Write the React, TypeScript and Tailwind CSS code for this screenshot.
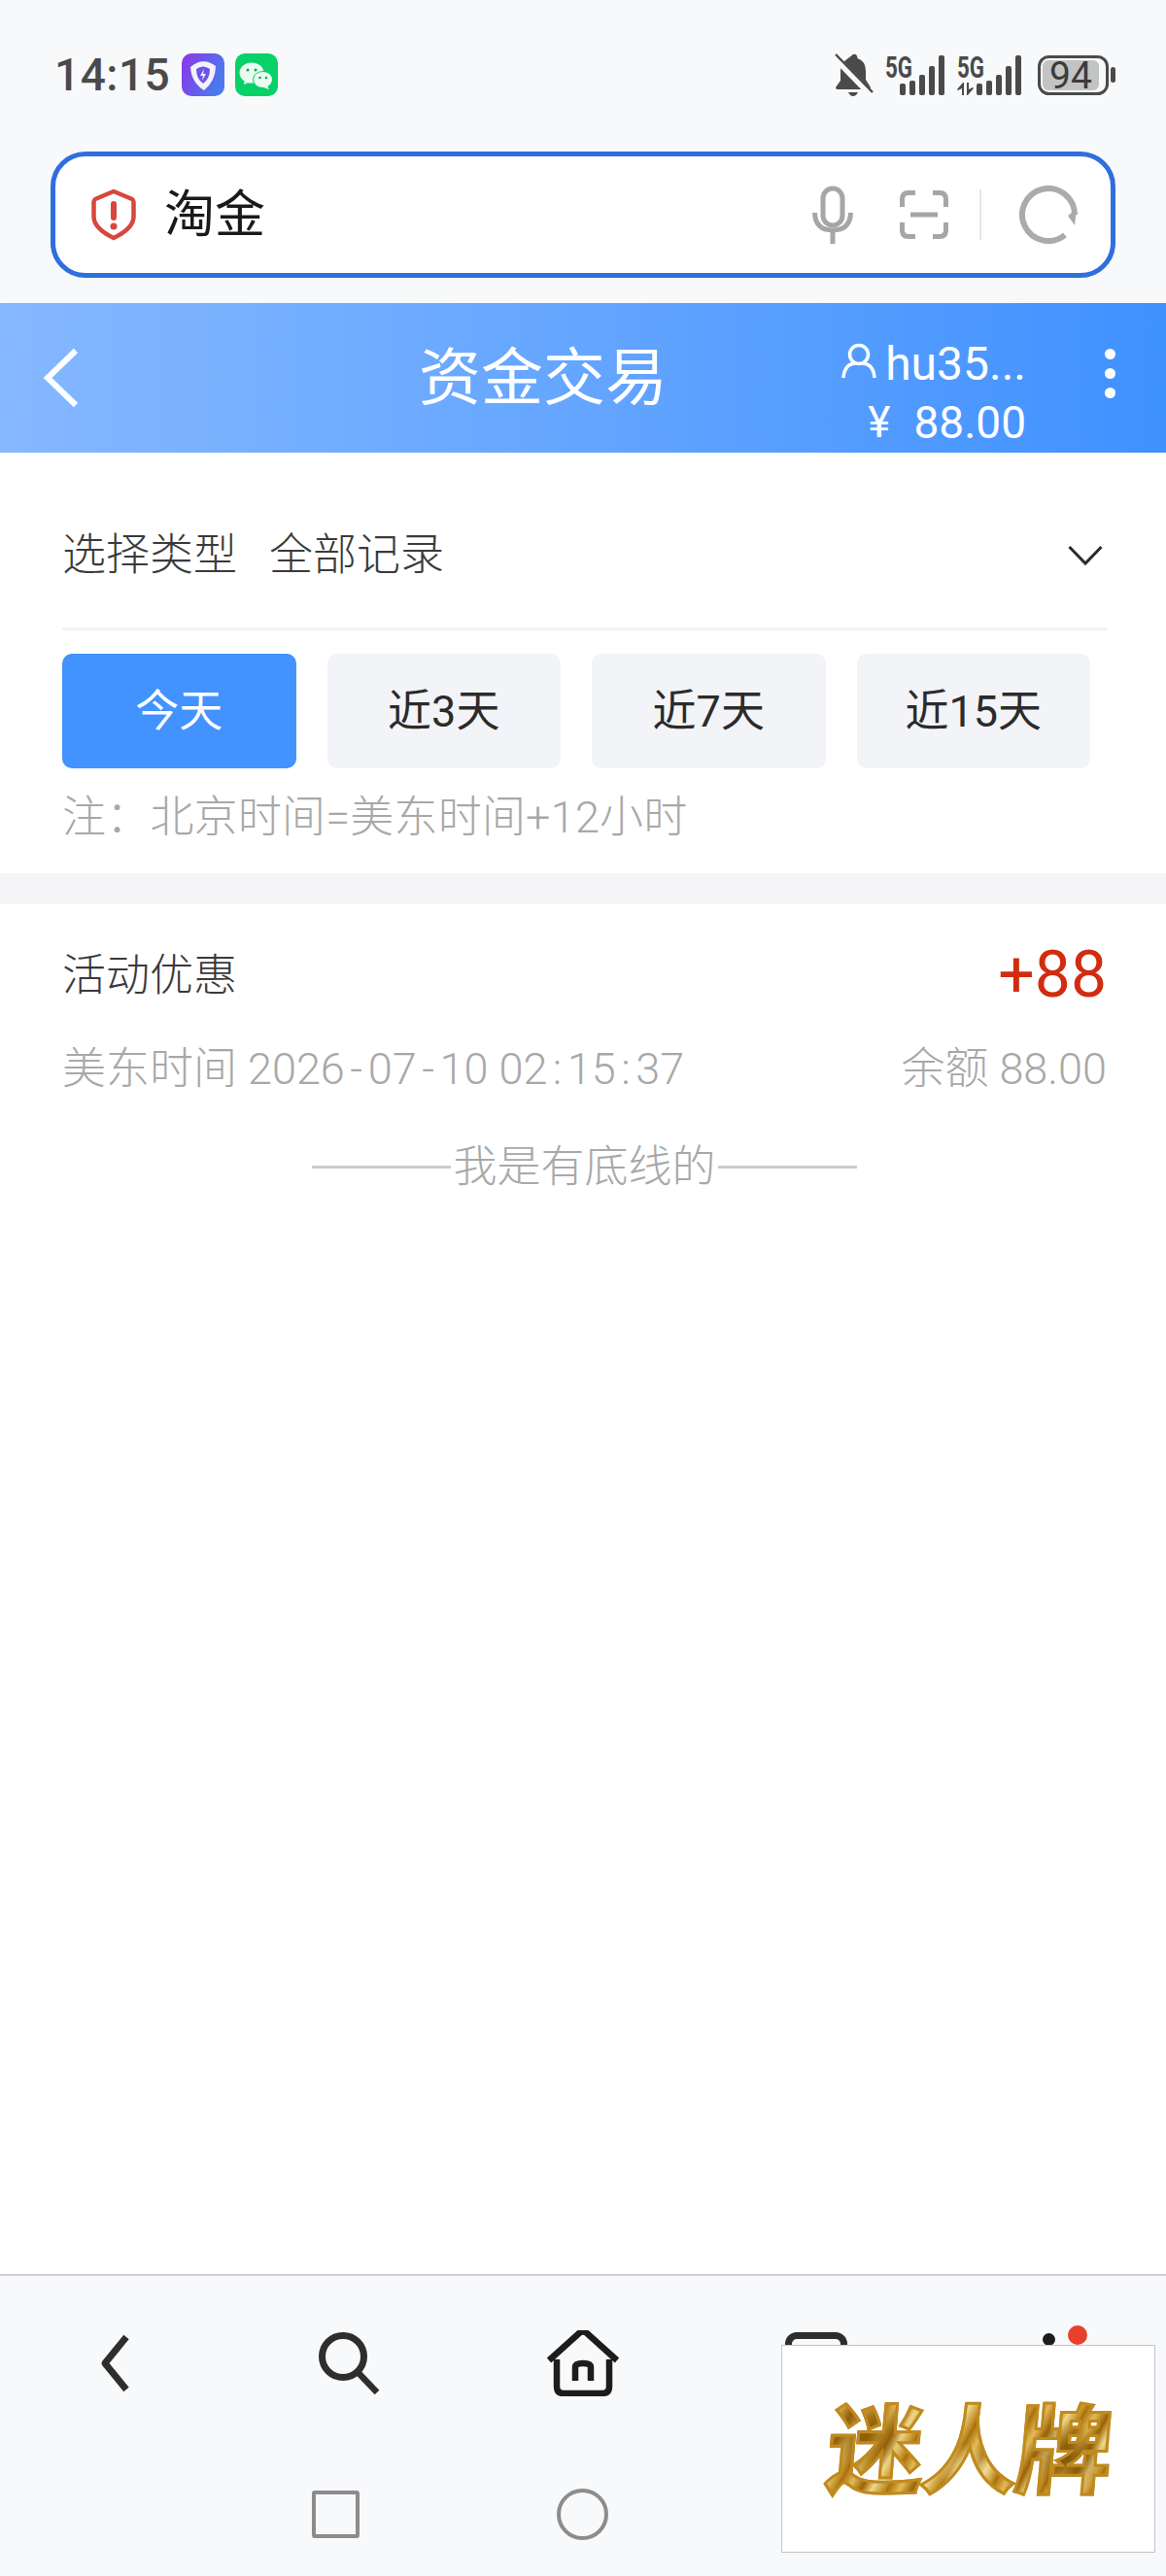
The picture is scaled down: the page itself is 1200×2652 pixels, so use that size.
import React from "react";

const FONT = "[font-family:Roboto,'Noto_Sans_CJK_SC',sans-serif]";

function AppIcons() {
  return (
    <div className="flex gap-[11px]">
      <svg width="44" height="44" viewBox="0 0 44 44">
        <defs>
          <linearGradient id="pg" x1="0" y1="0" x2="1" y2="0.4">
            <stop offset="0" stopColor="#8f35e8" />
            <stop offset="1" stopColor="#4a78ee" />
          </linearGradient>
        </defs>
        <rect width="44" height="44" rx="10" fill="url(#pg)" />
        <path d="M9 14 Q22 3 35 13 Q35 28 23 38 Q10 30 9 14Z" fill="#f4f0fc" />
        <path d="M15 16 Q22 11 29 16 Q29 26 22 31 Q15 26 15 16Z" fill="#6b55e8" />
        <path d="M23 16 L19 23 L22 23 L21 28 L25 21 L22 21Z" fill="#f4f0fc" />
      </svg>
      <svg width="44" height="44" viewBox="0 0 44 44">
        <rect width="44" height="44" rx="10" fill="#08d167" />
        <ellipse cx="17" cy="20" rx="12.5" ry="10.5" fill="#eafbf1" />
        <path d="M10 26 L9 32 L16 29Z" fill="#eafbf1" />
        <ellipse cx="28.5" cy="27" rx="10.5" ry="9" fill="#08d167" />
        <ellipse cx="28.5" cy="27" rx="9.5" ry="8" fill="#eafbf1" />
        <path d="M33 33 L35 37 L29 35Z" fill="#eafbf1" />
        <circle cx="13" cy="17" r="1.5" fill="#08a856" />
        <circle cx="21" cy="17" r="1.5" fill="#08a856" />
        <circle cx="25.5" cy="25" r="1.3" fill="#08a856" />
        <circle cx="32" cy="25" r="1.3" fill="#08a856" />
      </svg>
    </div>
  );
}

function Signal({ arrows }: { arrows?: boolean }) {
  const w = arrows ? 66 : 61;
  const off = arrows ? 20 : 15;
  const heights = [12, 15, 21, 30, 41];
  return (
    <svg width={w} height="51" viewBox={`0 -10 ${w} 51`} className="-mt-[10px]">
      <text
        x="0"
        y="23"
        textLength="28"
        lengthAdjust="spacingAndGlyphs"
        fontFamily="Roboto, sans-serif"
        fontWeight="700"
        fontSize="32"
        fill="#4a4a4a"
      >
        5G
      </text>
      {arrows && (
        <g fill="#4a4a4a">
          <path d="M5 41 V34 L1 36 L0 35 L6 28 L7 28 V41Z" />
          <path d="M10 28 H12 V35 L16 33 L17 34 L11 41 L10 41Z" />
        </g>
      )}
      {heights.map((h, i) => (
        <rect key={i} x={off + i * 10} y={41 - h} width="6" height={h} rx="2" fill="#4a4a4a" />
      ))}
    </svg>
  );
}

function StatusIcons() {
  return (
    <div className="flex items-center">
      <svg width="40" height="46" viewBox="0 0 40 46" className="mr-[12px]">
        <path
          d="M19 2 Q23 1 23.500 6 Q32 9 32 19 V28 L37 36 Q37 38 35 38 H3 Q1 38 1 36 L6 29 V19 Q6 12 10 9 Z"
          fill="#4a4a4a"
        />
        <path d="M14 41 H24 Q22 45 19 45 Q16 45 14 41Z" fill="#4a4a4a" />
        <path d="M0 5 L36 42" stroke="#f8f9fb" strokeWidth="7" />
        <path d="M1 2 L39 41" stroke="#4a4a4a" strokeWidth="2.500" />
      </svg>
      <Signal />
      <div className="w-[13px]" />
      <Signal arrows />
      <div className="w-[17px]" />
      <svg width="80" height="55" viewBox="0 -7 80 55" className="-my-[7px]">
        <rect x="1.500" y="1.500" width="70" height="38" rx="10" fill="#f8f9fb" stroke="#4a4a4a" strokeWidth="3" />
        <rect x="5" y="5" width="58" height="31" rx="6" fill="#c3c3c3" />
        <text x="34" y="34" textAnchor="middle" fontFamily="Roboto, sans-serif" fontSize="39" fill="#3c3c3c">
          94
        </text>
        <rect x="75" y="12" width="5" height="16" rx="2.500" fill="#4a4a4a" />
      </svg>
    </div>
  );
}

function SearchBar() {
  return (
    <div className="mx-[52px] h-[130px] rounded-[36px] border-[5px] border-[#2f6fdd] bg-white flex items-center pl-[37px] pr-[34px]">
      <svg width="46" height="54" viewBox="0 0 46 54" fill="none">
        <path
          d="M23 3 L42 11 Q43.500 12 43.500 14 V29 Q43.500 41 23 51 Q2.500 41 2.500 29 V14 Q2.500 12 4 11Z"
          stroke="#d8463d"
          strokeWidth="4.500"
          strokeLinejoin="round"
        />
        <rect x="20" y="13" width="6" height="20" rx="3" fill="#d8463d" />
        <circle cx="23" cy="39" r="3.500" fill="#d8463d" />
      </svg>
      <span className={`ml-[29px] mt-[2px] text-[52px] leading-none text-[#1a1a1a] ${FONT}`}>淘金</span>
      <div className="ml-auto flex items-center">
        <svg width="42" height="60" viewBox="0 0 42 60" fill="none">
          <rect x="11" y="3" width="20" height="38" rx="10" stroke="#a6a6a6" strokeWidth="5" />
          <path d="M2.500 28 Q3 46 21 46 Q39 46 39.500 28" stroke="#a6a6a6" strokeWidth="5" />
          <path d="M21 46 V60" stroke="#a6a6a6" strokeWidth="5" />
        </svg>
        <svg width="50" height="50" viewBox="0 0 50 50" fill="none" className="ml-[48px]">
          <path
            d="M16 2.500 H9 Q2.500 2.500 2.500 9 V17 M34 2.500 H41 Q47.500 2.500 47.500 9 V17 M16 47.500 H9 Q2.500 47.500 2.500 41 V33 M34 47.500 H41 Q47.500 47.500 47.500 41 V33"
            stroke="#a6a6a6"
            strokeWidth="5"
          />
          <path d="M11 25 H39" stroke="#a6a6a6" strokeWidth="5" />
        </svg>
        <div className="ml-[32px] w-[2px] h-[52px] bg-[#e6e6e6]" />
        <svg width="60" height="60" viewBox="0 0 60 60" fill="none" className="ml-[39px]">
          <path d="M57 30 A27 27 0 1 0 47 51" stroke="#ababab" strokeWidth="6" />
          <path d="M50 31 L57 41 L59 24Z" fill="#ababab" />
        </svg>
      </div>
    </div>
  );
}

function Header() {
  return (
    <div className="h-[154px] bg-gradient-to-r from-[#85b8ff] to-[#3f91ff] flex items-center text-white relative">
      <svg width="38" height="62" viewBox="0 0 38 62" fill="none" className="ml-[44px]">
        <path d="M34 3 L5 31 L34 59" stroke="#fff" strokeWidth="6" />
      </svg>
      <span className={`ml-[349px] mt-[2px] text-[64px] leading-none ${FONT}`}>资金交易</span>
      <div className="ml-auto flex flex-col items-end mr-[144px] mt-[32px] w-[195px]">
        <div className="flex items-center h-[60px]">
          <svg width="36" height="38" viewBox="0 0 36 38" fill="none" className="mr-[9px] mb-[6px]">
            <circle cx="18" cy="12" r="9.500" stroke="#fff" strokeWidth="3.500" />
            <path d="M2 36 Q3 22 14 21 M34 36 Q33 22 22 21" stroke="#fff" strokeWidth="3.500" />
          </svg>
          <span className={`text-[48px] leading-none ${FONT}`}>hu35...</span>
        </div>
        <div className="flex items-center h-[60px]">
          <span className={`text-[44px] leading-none mr-[24px] ${FONT}`}>¥</span>
          <span className={`text-[46px] leading-none ${FONT}`}>88.00</span>
        </div>
      </div>
      <div className="absolute left-[1137px] top-[47px] flex flex-col gap-[9px]">
        <div className="w-[11px] h-[11px] rounded-full bg-white" />
        <div className="w-[11px] h-[11px] rounded-full bg-white" />
        <div className="w-[11px] h-[11px] rounded-full bg-white" />
      </div>
    </div>
  );
}

function Tab({ label, active }: { label: string; active?: boolean }) {
  return (
    <div
      className={`w-[240.5px] h-[118px] rounded-[10px] flex items-center justify-center text-[45px] leading-none ${FONT} ${
        active ? "bg-[#4292ff] text-white" : "bg-[#f3f4f8] text-[#2b2b2b]"
      }`}
    >
      {label}
    </div>
  );
}

function Filter() {
  return (
    <div className="pl-[64px] pr-[61px]">
      <div className="pt-[30px] h-[183px] border-b-[3px] border-[#f3f3f3] flex items-center">
        <span className={`text-[45px] leading-none font-light text-[#3a3a3a] ${FONT}`}>选择类型</span>
        <span className={`ml-[33px] text-[45px] leading-none font-light text-[#3a3a3a] ${FONT}`}>全部记录</span>
        <svg width="36" height="22" viewBox="0 0 36 22" fill="none" className="ml-auto mr-[4px] mt-[2px]">
          <path d="M1.500 2 L18 19 L34.500 2" stroke="#2b2b2b" strokeWidth="3" />
        </svg>
      </div>
      <div className="mt-[24px] flex gap-[32px]">
        <Tab label="今天" active />
        <Tab label="近3天" />
        <Tab label="近7天" />
        <Tab label="近15天" />
      </div>
      <div className={`h-[108px] pb-[8px] flex items-center text-[45px] leading-none tracking-[0.2px] font-light text-[#a8a8a8] ${FONT}`}>
        注：北京时间=美东时间+12小时
      </div>
    </div>
  );
}

function Sep({ c }: { c: string }) {
  return <span className="mx-[5.5px]">{c}</span>;
}

function Record() {
  return (
    <div className="pl-[64px] pr-[61px]">
      <div className="pt-[38px] flex items-center justify-between h-[108px]">
        <span className={`text-[45px] leading-none font-light text-[#3a3a3a] ${FONT}`}>活动优惠</span>
        <span className={`text-[66px] leading-none text-[#d22c10] ${FONT}`}>+88</span>
      </div>
      <div className="mt-[31px] flex items-center justify-between h-[60px]">
        <span className={`text-[45px] leading-none font-light text-[#a8a8a8] ${FONT}`}>
          美东时间 2026<Sep c="-" />07<Sep c="-" />10 02<Sep c=":" />15<Sep c=":" />37
        </span>
        <span className={`text-[45px] leading-none font-light text-[#a8a8a8] ${FONT}`}>余额 88.00</span>
      </div>
      <div className="mt-[49px] flex items-center justify-center">
        <div className="w-[143px] h-[3px] bg-[#cccccc]" />
        <span className={`mx-[2px] text-[45px] leading-none font-light text-[#a8a8a8] ${FONT}`}>我是有底线的</span>
        <div className="w-[143px] h-[3px] bg-[#cccccc]" />
      </div>
    </div>
  );
}

function BottomNav() {
  return (
    <div className="mt-auto h-[311px] border-t-2 border-[#cfcfcf] bg-[#f8f9fb] relative">
      <div className="grid grid-cols-5 h-[180px] items-center">
        <div className="flex justify-center">
          <svg width="32" height="60" viewBox="0 0 32 60" fill="none" className="-ml-[4px]">
            <path d="M28 3 L6 30 L28 57" stroke="#2e2e2e" strokeWidth="7" strokeLinejoin="round" />
          </svg>
        </div>
        <div className="flex justify-center">
          <svg width="64" height="64" viewBox="0 0 64 64" fill="none">
            <circle cx="25" cy="25" r="21.500" stroke="#2e2e2e" strokeWidth="7" />
            <path d="M40 41 L60 62" stroke="#2e2e2e" strokeWidth="6.500" />
          </svg>
        </div>
        <div className="flex justify-center">
          <svg width="76" height="68" viewBox="0 0 76 68" fill="none">
            <path d="M3 31 L34 3 Q38 0 42 3 L73 31" stroke="#1c1c1c" strokeWidth="6.500" />
            <path d="M11 30 V58 Q11 65 18 65 H58 Q65 65 65 58 V30" stroke="#1c1c1c" strokeWidth="6.500" />
            <path d="M30 52 V38 Q30 34 38 34 Q46 34 46 38 V52" stroke="#1c1c1c" strokeWidth="6.500" />
          </svg>
        </div>
        <div className="flex justify-center">
          <div className="w-[64px] h-[64px] rounded-[12px] border-[7px] border-[#2e2e2e]" />
        </div>
        <div />
      </div>
      <div className="absolute left-[1073px] top-[59px] w-[13px] h-[13px] rounded-full bg-[#1c1c1c]" />
      <div className="absolute left-[1099px] top-[51px] w-[20px] h-[20px] rounded-full bg-[#e8402a]" />
      <div className="mt-[25px] flex items-center h-[80px]">
        <div className="ml-[321px] w-[49px] h-[49px] rounded-[3px] border-[4px] border-[#8c8c8c]" />
        <div className="ml-[203px] w-[53px] h-[53px] rounded-full border-[4px] border-[#8c8c8c]" />
      </div>
      <div className="absolute left-[804px] top-[71px] w-[385px] h-[214px] border border-[#c4c4c4] bg-white flex items-center justify-center pt-[8px]">
        <span
          className={`-skew-x-[5deg] font-bold text-[100px] leading-none tracking-[-3px] [-webkit-text-stroke:3px_#c08a1e] bg-[radial-gradient(circle_at_12%_30%,#8a5a06_0,transparent_16%),radial-gradient(circle_at_50%_70%,#f5e2a0_0,transparent_18%),radial-gradient(circle_at_85%_55%,#7f5306_0,transparent_15%),repeating-linear-gradient(115deg,#a86c08_0px,#e2bb55_12px,#9a6206_24px,#f0d888_34px,#b67e12_48px)] bg-clip-text text-transparent ${FONT}`}
        >
          迷人牌
        </span>
      </div>
    </div>
  );
}

export default function App() {
  return (
    <div className="w-[1200px] h-[2652px] bg-white flex flex-col overflow-hidden">
      <div className="h-[312px] bg-[#f8f9fb]">
        <div className="h-[156px] pl-[56px] pr-[52px] pb-[2px] flex items-center justify-between">
          <div className="flex items-center">
            <span className={`text-[46px] leading-none font-medium tracking-[0.5px] text-[#4a4a4a] ${FONT}`}>14:15</span>
            <div className="ml-[12px]">
              <AppIcons />
            </div>
          </div>
          <StatusIcons />
        </div>
        <SearchBar />
      </div>
      <Header />
      <Filter />
      <div className="h-[32px] bg-[#f5f5f8]" />
      <Record />
      <BottomNav />
    </div>
  );
}
